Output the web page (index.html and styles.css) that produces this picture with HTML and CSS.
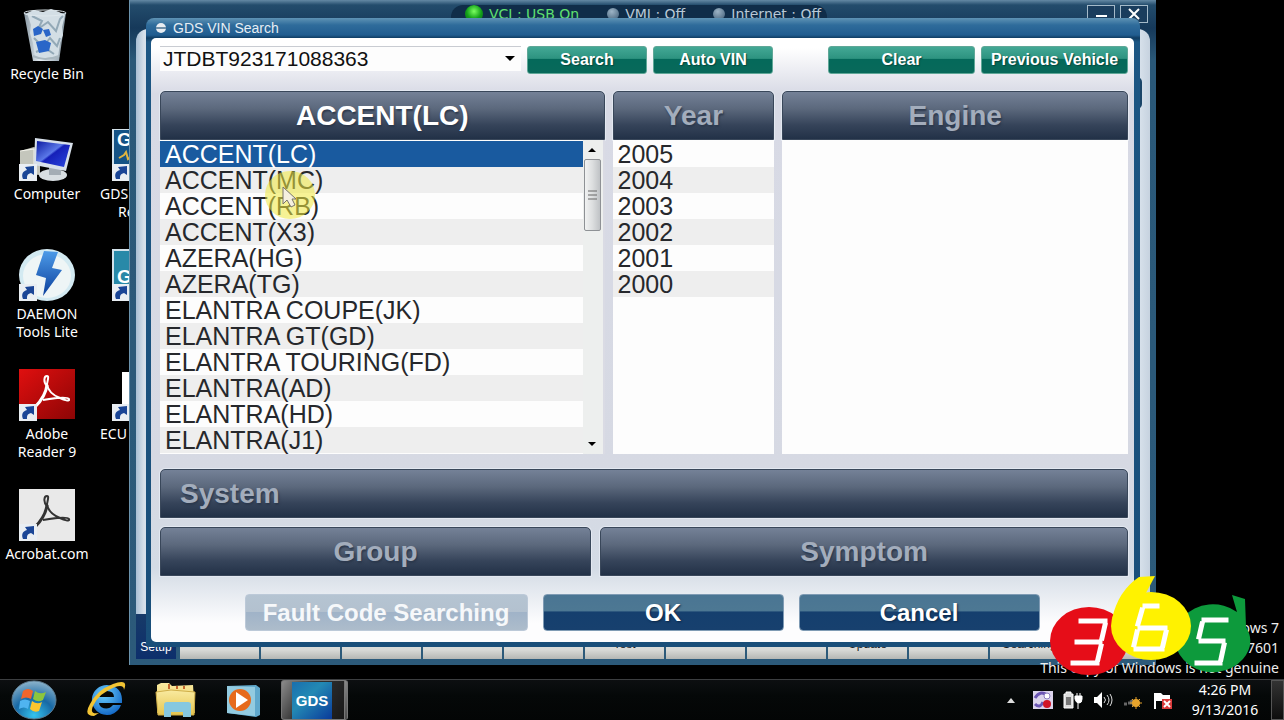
FILE: index.html
```html
<!DOCTYPE html>
<html lang="en">
<head>
<meta charset="utf-8">
<title>GDS VIN Search</title>
<link rel="stylesheet" href="styles.css">
</head>
<body>
<svg class="defs" aria-hidden="true">
  <defs>
    <linearGradient id="screen" x1="0" y1="0" x2="1" y2="1"><stop offset="0" stop-color="#0a18a0"/><stop offset=".45" stop-color="#5a78e8"/><stop offset=".5" stop-color="#1520b8"/><stop offset="1" stop-color="#2a48e0"/></linearGradient>
    <linearGradient id="bin" x1="0" y1="0" x2="1" y2="0"><stop offset="0" stop-color="#8b9aa5"/><stop offset=".4" stop-color="#e8f0f5"/><stop offset="1" stop-color="#8494a0"/></linearGradient>
    <linearGradient id="bolt" x1="0" y1="0" x2="0" y2="1"><stop offset="0" stop-color="#4d9be8"/><stop offset="1" stop-color="#0b3f9c"/></linearGradient>
    <linearGradient id="red" x1="0" y1="0" x2="1" y2="1"><stop offset="0" stop-color="#e00f0f"/><stop offset="1" stop-color="#8c0505"/></linearGradient>
    <linearGradient id="gds" x1="0" y1="0" x2="1" y2="1"><stop offset="0" stop-color="#1a6fae"/><stop offset=".4" stop-color="#2389b4"/><stop offset="1" stop-color="#0a3a9a"/></linearGradient>
    <radialGradient id="orb" cx=".5" cy=".9" r=".9"><stop offset="0" stop-color="#35c4ee"/><stop offset=".5" stop-color="#1768a4"/><stop offset="1" stop-color="#8db4cc"/></radialGradient>
    <radialGradient id="ie" cx=".4" cy=".3" r=".8"><stop offset="0" stop-color="#6cd0ff"/><stop offset="1" stop-color="#0a5dc0"/></radialGradient>
    <linearGradient id="folder" x1="0" y1="0" x2="0" y2="1"><stop offset="0" stop-color="#f9eaa0"/><stop offset="1" stop-color="#e5c650"/></linearGradient>
    <symbol id="shortcut" viewBox="0 0 18 17"><path d="M0 0h18v17H0z" fill="#e9eef3"/><path d="M4 15c-2-5 0-8 4-9L6 3l9-1v9l-3-2c-4 1-4 3-4 6z" fill="#1a4596"/></symbol>
    <symbol id="acro" viewBox="0 0 56 52"><g fill="none" stroke="currentColor"><path d="M16 38c6-6 11-14 12-22" stroke-width="3"/><path d="M28 17c-4-4-3-10 0-10 2 0 1 3 0 8 1 8 8 12 13 14 4 2 10 4 9 1-2-3-15-1-26 1" stroke-width="2"/></g></symbol>
  </defs>
</svg>

<main class="desktop">
  <div class="icons">
    <a class="icon" href="#bin"><svg width="56" height="52" viewBox="-2 0 56 52"><path d="M3 4l9 48q13 7 26 0l7-48z" fill="url(#bin)"/><path d="M6 4l7-3 9 2 8-3 8 3 6 3-3 12 1 8-3 8-2 14H14l-2-14-3-10 1-8z" fill="#d3dee5"/><path d="M11 7l10 5-4 8 10-7 8 9 4-12 3-3M13 29l9 9 7-9 7 8 3-8M15 43l9-4 9 6" fill="none" stroke="#93a9b7" stroke-width="2"/><path d="M12 20l5-3 5 3-2 5-7 2zM22 21l6-1 2 6-5 2zM15 33l9-2 6 3-2 8-10 2z" fill="#2a66c8"/><ellipse cx="24" cy="4" rx="21" ry="3" fill="none" stroke="#dfe8ed"/><path d="M12 47q12 6 26 0" fill="none" stroke="#aab8c0" stroke-width="2"/></svg><span>Recycle Bin</span></a>
    <a class="icon" href="#computer"><svg width="56" height="52" viewBox="0 0 56 52"><path d="M1 22l14-4 6 3v25l-12-1-8-4z" fill="#c4c6bc"/><path d="M1 22l14-2v23" fill="none" stroke="#f4f4ec"/><ellipse cx="34" cy="46" rx="14" ry="6" fill="#d8dee2"/><path d="M30 34l12 2v10H30z" fill="#a4adb5"/><path d="M16 9l38 5-7 28-32-6z" fill="#d7e0ea"/><path d="M18 12l33 4-6 22-28-6z" fill="url(#screen)"/><use href="#shortcut" y="35" width="18" height="17"/></svg><span>Computer</span></a>
    <a class="icon" href="#daemon"><svg width="56" height="52" viewBox="0 0 56 52"><ellipse cx="28" cy="26" rx="28" ry="26" fill="#d3eaf2"/><ellipse cx="28" cy="27" rx="24" ry="22" fill="#eef5f6"/><path d="M25 2l14 1-6 16 10 2-19 26 3-18-10-3z" fill="url(#bolt)"/><use href="#shortcut" y="35" width="18" height="17"/></svg><span>DAEMON<br>Tools Lite</span></a>
    <a class="icon" href="#reader"><svg width="56" height="52" viewBox="0 0 56 52"><path d="M0 0h56v50H0z" fill="url(#red)"/><use href="#acro" width="56" height="52" color="#fff"/><use href="#shortcut" y="35" width="18" height="17"/></svg><span>Adobe<br>Reader 9</span></a>
    <a class="icon" href="#acrobat"><svg width="56" height="52" viewBox="0 0 56 52"><path d="M0 0h56v52H0z" fill="#e9e9e9"/><use href="#acro" width="56" height="52" color="#333"/><use href="#shortcut" y="35" width="18" height="17"/></svg><span>Acrobat.com</span></a>
  </div>
  <div class="icons icons-second">
    <a class="icon" href="#gds-re"><svg width="34" height="52" viewBox="0 0 34 52"><path d="M0 0h34v52H0z" fill="#145386"/><path d="M0 0h34M1 0v52" stroke="#d3e2ea" stroke-width="2"/><text x="5" y="17" class="logo-text">G</text><path d="M7 29l5-3 2-3 2 7 4-3" fill="none" stroke="#e0b540" stroke-width="2"/><use href="#shortcut" y="35" width="18" height="17"/></svg><span>GDS<br><span class="indent">Re</span></span></a>
    <a class="icon" href="#gds"><svg width="34" height="52" viewBox="0 0 34 52"><path d="M0 0h34v52H0z" fill="#2889a8"/><path d="M0 1h34M1 0v52" stroke="#d3e2ea" stroke-width="2"/><text x="5" y="34" class="logo-text">G</text><use href="#shortcut" y="35" width="18" height="17"/></svg></a>
    <a class="icon" href="#ecu"><svg width="34" height="52" viewBox="0 0 34 52"><path d="M10 3h24v49H10z" fill="#fff"/><use href="#shortcut" y="35" width="18" height="17"/></svg><span>ECU</span></a>
  </div>

  <section class="gds-window" aria-label="GDS">
    <header class="gds-bar">
      <div class="status">
        <span class="state on"><i class="lamp"></i>VCI : USB On</span>
        <span class="state"><i class="lamp"></i>VMI : Off</span>
        <span class="state"><i class="lamp"></i>Internet : Off</span>
      </div>
      <div class="window-buttons">
        <button aria-label="Minimize"><svg width="12" height="12"><path d="M1 8h11" stroke="#fff" stroke-width="2"/></svg></button>
        <button aria-label="Close"><svg width="12" height="12"><path d="M1 1l10 10M11 1L1 11" stroke="#fff" stroke-width="2"/></svg></button>
      </div>
    </header>
    <div class="gds-page"><i class="notch"></i></div>
    <nav class="tabs">
      <button class="tab setup">Setup</button>
      <button class="tab" aria-label="Tab 1"></button><button class="tab" aria-label="Tab 2"></button><button class="tab" aria-label="Tab 3"></button><button class="tab" aria-label="Tab 4"></button><button class="tab" aria-label="Tab 5"></button><button class="tab">Test</button><button class="tab" aria-label="Tab 7"></button><button class="tab" aria-label="Tab 8"></button><button class="tab">Update</button><button class="tab" aria-label="Tab 10"></button><button class="tab">Searching</button><button class="tab" aria-label="Tab 12"></button>
    </nav>
  </section>

  <section class="dialog" role="dialog" aria-labelledby="dialog-title">
    <header class="dialog-bar">
      <svg width="12" height="12" viewBox="0 0 12 12"><circle cx="6" cy="6" r="5" fill="#e8edf2"/><path d="M1 6h10" stroke="#6f8fa8" stroke-width="2"/></svg>
      <h1 id="dialog-title">GDS VIN Search</h1>
    </header>
    <div class="dialog-body">
      <form class="search">
        <div class="combo">
          <select aria-label="VIN"><option>JTDBT923171088363</option></select>
          <svg width="10" height="5"><path d="M0 0h10L5 5z"/></svg>
        </div>
        <button type="button" class="green">Search</button>
        <button type="button" class="green">Auto VIN</button>
        <button type="button" class="green wide push">Clear</button>
        <button type="button" class="green wide">Previous Vehicle</button>
      </form>

      <div class="columns">
        <div class="column model">
          <h2 class="bar active">ACCENT(LC)</h2>
          <div class="pane">
            <ul class="list" role="listbox" aria-label="Model">
              <li role="option" aria-selected="true">ACCENT(LC)</li>
              <li role="option">ACCENT(MC)</li>
              <li role="option">ACCENT(RB)</li>
              <li role="option">ACCENT(X3)</li>
              <li role="option">AZERA(HG)</li>
              <li role="option">AZERA(TG)</li>
              <li role="option">ELANTRA COUPE(JK)</li>
              <li role="option">ELANTRA GT(GD)</li>
              <li role="option">ELANTRA TOURING(FD)</li>
              <li role="option">ELANTRA(AD)</li>
              <li role="option">ELANTRA(HD)</li>
              <li role="option">ELANTRA(J1)</li>
            </ul>
            <div class="scroll">
              <svg width="8" height="4"><path d="M0 4h8L4 0z"/></svg>
              <div class="thumb"><svg width="9" height="10"><path d="M0 1h9M0 5h9M0 9h9" stroke="#666"/></svg></div>
              <svg class="down" width="8" height="4"><path d="M0 0h8L4 4z"/></svg>
            </div>
          </div>
        </div>
        <div class="column year">
          <h2 class="bar">Year</h2>
          <div class="pane">
            <ul class="list" role="listbox" aria-label="Year">
              <li role="option">2005</li>
              <li role="option">2004</li>
              <li role="option">2003</li>
              <li role="option">2002</li>
              <li role="option">2001</li>
              <li role="option">2000</li>
            </ul>
          </div>
        </div>
        <div class="column engine">
          <h2 class="bar">Engine</h2>
          <div class="pane"></div>
        </div>
      </div>

      <h2 class="bar system">System</h2>
      <div class="pair">
        <h2 class="bar group">Group</h2>
        <h2 class="bar symptom">Symptom</h2>
      </div>
      <div class="actions">
        <button class="blue fault" disabled>Fault Code Searching</button>
        <button class="blue">OK</button>
        <button class="blue">Cancel</button>
      </div>
    </div>
  </section>

  <svg class="pointer" width="52" height="50" viewBox="0 0 52 50" aria-hidden="true"><ellipse cx="26" cy="25" rx="25" ry="24" fill="#f0ea40" opacity=".55"/><path d="M19 17v17l4-4 4 7 4-2-3-6h4z" fill="#f5f0e0" stroke="#77736a"/></svg>

  <p class="genuine">Windows 7<br>Build 7601<br>This copy of Windows is not genuine</p>
  <svg class="brand" width="206" height="104" viewBox="0 0 206 104" role="img" aria-label="365">
    <ellipse cx="41" cy="67" rx="39" ry="34" fill="#e60d18"/>
    <path d="M184 21l13 4 1 28q10 16-3 32a38 34 0 1 1-6-47z" fill="#0d9a3c"/>
    <path d="M64 45Q70 17 91 3l16-1-9 17z" fill="#fff200"/>
    <ellipse cx="103" cy="52" rx="40" ry="34" fill="#fff200"/>
    <g fill="none" stroke="#fff" stroke-width="5" stroke-linecap="square">
      <path d="M33 47h24M29 68h23M25 89h24M57 51l-3 13M53 72l-3 13"/>
      <path d="M97 32h12M94 36l-4 14M92 54h25M89 58l-3 13M118 58l-3 13M88 75h26"/>
      <path d="M156 46h22M154 50l-3 13M153 67h22M176 71l-3 14M149 89h23"/>
    </g>
  </svg>
</main>

<footer class="taskbar">
  <button class="task" aria-label="Start"><svg width="46" height="40" viewBox="0 0 46 40"><ellipse cx="23" cy="20" rx="22" ry="19" fill="url(#orb)" stroke="#5f7c8f"/><path d="M12 11q5-4 10 0l-2 8q-5-3-10 0z" fill="#f0652c"/><path d="M24 11q5 4 11 1l-3 8q-5 3-10-1z" fill="#8cc63e"/><path d="M9 21q5-3 10 0l-2 8q-4-3-9 0z" fill="#4fb4f0"/><path d="M21 21q5 4 10 1l-3 9q-5 2-9-2z" fill="#fcc62e"/></svg></button>
  <button class="task" aria-label="Internet Explorer"><svg width="42" height="40" viewBox="0 0 42 40"><path fill-rule="evenodd" d="M22 5a15 15 0 1 0 14 20h-8q-5 6-12 2-2-2-2-4h23Q38 6 22 5zm-8 12q1-6 8-6t7 6z" fill="url(#ie)"/><path d="M9 36Q-2 36 5 24 12 10 28 4q16-6 11 6 0-6-9-3Q14 13 8 26q-4 9 6 7z" fill="#f2c434"/></svg></button>
  <button class="task" aria-label="Explorer"><svg width="42" height="40" viewBox="0 0 42 40"><path d="M2 5l4-2h8l3 3 21-1 2 28H2z" fill="url(#folder)"/><path d="M1 12l15-2 24 2-1 23H3z" fill="url(#folder)" stroke="#cfae48"/><path d="M9 25q0-3 3-3h21q3 0 3 3v12h-8v-5H16v5H9z" fill="#86c8e0"/><path d="M14 4v5M22 6v3M29 6v3" stroke="#c5662c" stroke-width="2"/></svg></button>
  <button class="task" aria-label="Media Player"><svg width="36" height="40" viewBox="0 0 36 40"><path d="M2 6l29-1 4 3v27l-4 2L2 33z" fill="#5fa8cc"/><path d="M2 6l28 1v29L2 33z" fill="#93cbe0"/><circle cx="15" cy="20" r="11" fill="#e66a1c"/><path d="M11 12l12 8-12 8z" fill="#fff"/></svg></button>
  <button class="task running" aria-label="GDS"><svg width="40" height="37" viewBox="0 0 40 37"><path d="M0 0h40v37H0z" fill="url(#gds)"/><text x="20" y="24" text-anchor="middle" class="logo-text small">GDS</text></svg></button>

  <div class="tray">
    <svg width="8" height="5"><path d="M0 5h8L4 0z" fill="#ddd"/></svg>
    <svg width="20" height="20" viewBox="0 0 20 20"><path d="M0 1h20v18H0z" fill="#dcd4ec"/><path d="M2 8q5-8 12-3M2 14q5 5 8-2" fill="none" stroke="#6b55b4" stroke-width="3"/><circle cx="14" cy="14" r="4" fill="#d11528"/><circle cx="14" cy="6" r="3" fill="#fff" stroke="#8a7ac0"/></svg>
    <svg width="20" height="20" viewBox="0 0 20 20"><path d="M1 4h2V2h5v2h2v14H1z" fill="#ddd" stroke="#fff"/><path d="M3 7h5v8H3z" fill="#777"/><path d="M12 6h7v3q0 4-3 4t-4-4zM14 3v4M17 3v4M15 12v7" fill="#fff" stroke="#fff"/></svg>
    <svg width="20" height="20" viewBox="0 0 20 20"><path d="M1 7h3l5-5v16l-5-5H1z" fill="#fff"/><path d="M11 7q3 3 0 6M14 5q4 5 0 10M17 4q4 6 0 12" fill="none" stroke="#ddd"/></svg>
    <svg width="20" height="20" viewBox="0 0 20 20"><path d="M1 14h3M5 13h3M8 10l3 6" stroke="#666" stroke-width="3"/><circle cx="13" cy="13" r="4" fill="#e9a52c"/><path d="M13 7v12M7 13h12M9 9l8 8M17 9l-8 8" stroke="#e9a52c"/></svg>
    <svg width="20" height="20" viewBox="0 0 20 20"><path d="M2 3v16" stroke="#fff" stroke-width="2"/><path d="M3 3h5l2 2h7v8h-6l-2-2H3z" fill="#fff"/><path d="M9 9h10v10H9z" fill="#d93a3a"/><path d="M11 11l6 6M17 11l-6 6" stroke="#fff" stroke-width="2"/></svg>
    <time class="clock">4:26 PM<br>9/13/2016</time>
  </div>
  <button class="peek" aria-label="Show desktop"></button>
</footer>
</body>
</html>
```

FILE: styles.css
```css
* { box-sizing: border-box; }
body {
  margin: 0;
  height: 100vh;
  display: flex;
  flex-direction: column;
  overflow: hidden;
  background: #000;
  font-family: "Liberation Sans", Arial, sans-serif;
}
button, select { font: inherit; margin: 0; }
h1, h2, p, ul { margin: 0; padding: 0; font: inherit; list-style: none; }
svg { display: block; flex: none; }
.defs { position: absolute; width: 0; height: 0; }

.desktop {
  position: relative;
  flex: 1;
  min-height: 0;
  display: flex;
  overflow: hidden;
}

/* desktop shortcuts */
.icons {
  display: grid;
  grid-auto-rows: 120px;
  align-content: start;
  width: 94px;
  padding-top: 9px;
  font: 14px/18px "Noto Sans", sans-serif;
}
.icon {
  display: flex;
  flex-direction: column;
  align-items: center;
  gap: 4px;
  color: #fff;
  text-align: center;
  text-decoration: none;
}
.icons-second { padding-top: 129px; }
.icons-second .icon { align-items: flex-start; padding-left: 6px; text-align: left; }
.icons-second svg { margin-left: 12px; }
.indent { padding-left: 18px; }
.logo-text { font: bold 19px "Liberation Sans", sans-serif; fill: #fff; }
.logo-text.small { font-size: 15px; }

/* main program window */
.gds-window {
  position: absolute;
  inset: 0 128px 14px 129px;
  display: flex;
  flex-direction: column;
  padding: 0 6px 6px;
  border-left: 1px solid #6b93ad;
  background: linear-gradient(#6489a4 0, #234c6c 5px, #16395a 28px, #2a5878 60px, #2c5a7a 100%);
}
.gds-bar {
  display: flex;
  height: 29px;
  justify-content: flex-end;
  align-items: flex-start;
  gap: 260px;
  padding: 5px 2px 0 0;
}
.status {
  display: flex;
  gap: 28px;
  width: 376px;
  height: 24px;
  padding-left: 14px;
  border-radius: 12px 12px 0 0;
  background: #102d49;
  color: #b9c8d6;
  font: 14px/18px "DejaVu Sans", sans-serif;
  white-space: nowrap;
}
.state { display: flex; gap: 6px; }
.state.on { color: #5fe070; }
.lamp {
  width: 12px;
  height: 12px;
  margin-top: 3px;
  border-radius: 50%;
  background: radial-gradient(circle at 40% 30%, #9db4c6, #3c5a74);
}
.on .lamp { width: 18px; height: 18px; margin-top: 0; background: radial-gradient(circle at 50% 35%, #7bff60, #12a018 50%, #0a5a20); }
.window-buttons { display: flex; gap: 5px; }
.window-buttons button {
  display: grid;
  place-items: center;
  width: 28px;
  height: 18px;
  padding: 0;
  border: 1px solid #a5bac9;
  background: #1a3d5d;
}
.gds-page {
  flex: 1;
  padding: 48px 8px 0 0;
  border-radius: 12px 12px 0 0;
  background: linear-gradient(90deg, #a9bfd4, #d6e0ea 8px, #d6e0ea calc(100% - 10px), #c6d2df);
}
.notch { display: block; width: 16px; height: 32px; margin-left: auto; border-radius: 0 5px 5px 0; background: #1a4568; }
.tabs { display: flex; gap: 2px; height: 45px; }
.tab {
  flex: 1;
  min-width: 0;
  padding: 15px 0 0;
  border: 0;
  background: linear-gradient(#f4f4f2, #d8d9d6 80%, #b5b7b4);
  color: #222;
  font-size: 12px;
  line-height: 12px;
}
.setup { flex: 0 0 40px; margin-right: 2px; padding-top: 21px; background: linear-gradient(#173a68, #0d2f6c); color: #fff; }

/* VIN search dialog */
.dialog {
  position: absolute;
  inset: 18px 144px 32px 146px;
  display: flex;
  flex-direction: column;
  padding: 0 6px 5px 5px;
  border-radius: 8px 8px 4px 4px;
  background: linear-gradient(#5f93b5 0, #2f6c9b 7px, #215d90 17px, #0f3c62 20px, #1c5683 24px, #194e79 100%);
}
.dialog-bar {
  display: flex;
  align-items: center;
  gap: 6px;
  height: 20px;
  padding-left: 4px;
}
.dialog-bar h1 { color: #e6eef4; font-size: 14px; line-height: 18px; }
.dialog-body {
  flex: 1;
  min-height: 0;
  display: flex;
  flex-direction: column;
  padding: 8px 6px 12px 9px;
  border-radius: 5px;
  background: linear-gradient(#fff 0, #fff 10px, #d8dae5 56px, #d6d9e3 440px, #d3dbe5 530px, #fdfdfe 585px);
}
.search { display: flex; gap: 6px; height: 28px; }
.combo { position: relative; flex: 0 1 361px; height: 25px; }
.combo select {
  appearance: none;
  width: 100%;
  height: 25px;
  padding: 0 3px;
  border: 0;
  border-top: 1px solid #c9ccd2;
  border-radius: 0;
  background: #fdfdfd;
  color: #111;
  font-size: 21px;
  line-height: 24px;
}
.combo svg { position: absolute; right: 6px; top: 10px; pointer-events: none; }
.green {
  width: 120px;
  height: 28px;
  padding: 0;
  border: 1px solid #5fa797;
  border-radius: 3px;
  background: linear-gradient(#43a895, #2d9380 44%, #04695a 46%, #08695a);
  color: #fff;
  font-size: 16px;
  font-weight: bold;
  line-height: 24px;
  white-space: nowrap;
  text-shadow: 1px 1px 1px #06483e;
}
.wide { width: 147px; }
.push { margin-left: auto; }

.bar {
  height: 49px;
  border: 1px solid #39475a;
  border-radius: 5px 5px 0 0;
  background: linear-gradient(#748197, #5c697d 35%, #36445a 70%, #223147);
  color: #a3adbc;
  font-size: 28px;
  font-weight: bold;
  line-height: 47px;
  text-align: center;
  text-shadow: 1px 2px 2px #2b384c;
  box-shadow: 0 0 0 1px #e3e8f1;
}
.bar.active { color: #fff; }
.columns { flex: 1; min-height: 0; display: flex; gap: 8px; margin-top: 17px; }
.column { min-width: 0; display: flex; flex-direction: column; }
.model { flex: 445; }
.year { flex: 162; }
.engine { flex: 346; }
.pane { position: relative; flex: 1; min-height: 0; display: flex; overflow: hidden; background: #fdfdfd; }
.list { flex: 1; min-width: 0; padding-top: 1px; }
.list li {
  padding-left: 5px;
  color: #26282c;
  font-size: 25px;
  line-height: 26px;
  white-space: nowrap;
}
.list li:nth-child(even) { background: #eee; }
.list li[aria-selected="true"] { background: #195a9f; color: #fff; }
.scroll {
  display: flex;
  flex-direction: column;
  align-items: center;
  gap: 7px;
  width: 22px;
  padding: 8px 2px 8px 1px;
  border-right: 2px solid #dadbe4;
  background: #edefee;
}
.thumb {
  display: grid;
  place-items: center;
  align-self: stretch;
  height: 72px;
  border: 1px solid #8e9195;
  border-radius: 2px;
  background: linear-gradient(90deg, #f1f2f2, #dcdedf 50%, #bfc2c5);
}
.down { margin-top: auto; }
.system { margin-top: 15px; padding-left: 19px; text-align: left; }
.pair { display: flex; gap: 9px; margin-top: 9px; }
.group { flex: 431; }
.symptom { flex: 528; }
.actions { display: flex; justify-content: center; gap: 15px; margin-top: 18px; padding-right: 4px; }
.columns + .system { flex: none; }
.dialog-body { padding-bottom: 11px; }
.blue {
  width: 241px;
  height: 37px;
  padding: 0;
  border: 1px solid #7f9bb4;
  border-radius: 4px;
  background: linear-gradient(#4a7593, #4d7893 46%, #153f6e 48%, #17406e);
  color: #fff;
  font-size: 24px;
  font-weight: bold;
  line-height: 34px;
  white-space: nowrap;
  text-shadow: 1px 1px 2px #0b2748;
}
.fault { width: 283px; border-color: #bcc9d8; background: linear-gradient(#b5c4d2, #b3c1cf 48%, #a0b3c8 50%, #adbccb); text-shadow: none; color: #f6f8fa; }

.pointer { position: absolute; left: 264px; top: 170px; pointer-events: none; }

/* corner notice and logo */
.genuine {
  position: absolute;
  right: 5px;
  bottom: 1px;
  color: #eee;
  font: 14px/20px "Noto Sans", sans-serif;
  text-align: right;
  white-space: nowrap;
}
.brand { position: absolute; right: 30px; bottom: 1px; }

/* taskbar */
.taskbar {
  display: flex;
  align-items: center;
  height: 41px;
  padding-left: 11px;
  border-top: 1px solid #3c3e40;
  background: linear-gradient(#0d0f11, #050808 40%, #030505);
}
.task { display: grid; padding: 0; border: 0; background: none; }
.task + .task { margin-left: 28px; }
.taskbar .running {
  width: 67px;
  height: 40px;
  margin-left: 20px;
  padding: 0 0 0 10px;
  align-items: center;
  border: 1px solid #777;
  border-right: 4px double #777;
  border-radius: 3px;
  background: linear-gradient(120deg, #8b8b8b, #333 40%, #181818);
}
.tray { display: flex; align-items: center; gap: 10px; margin-left: auto; }
.tray svg:first-child { margin-right: 8px; }
.clock {
  width: 84px;
  color: #fff;
  font: 14px/20px "Noto Sans", sans-serif;
  text-align: center;
}
.peek {
  width: 13px;
  height: 40px;
  margin-left: 4px;
  padding: 0;
  border: 1px solid #555;
  background: linear-gradient(#333, #0d0d0d);
}
```
